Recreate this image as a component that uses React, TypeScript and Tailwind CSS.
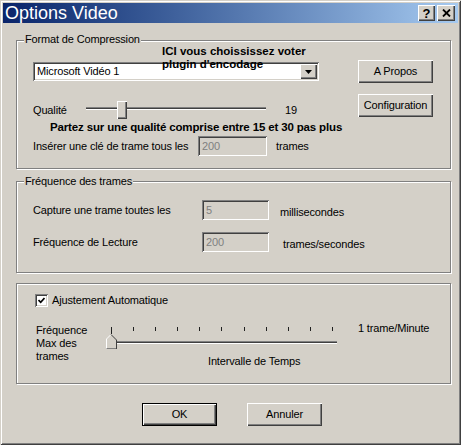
import React from 'react'

// Win2k 3D borders
const raised = 'shadow-[inset_1px_1px_0_#fff,inset_-1px_-1px_0_#404040,inset_-2px_-2px_0_#808080]'
const sunken =
  'shadow-[inset_1px_1px_0_#808080,inset_-1px_-1px_0_#fff,inset_2px_2px_0_#404040,inset_-2px_-2px_0_#d4d0c8]'
const etched = 'border border-[#808080] shadow-[inset_1px_1px_0_#fff,1px_1px_0_#fff]'

const Button: React.FC<{ label: string; isDefault?: boolean; className?: string }> = ({
  label,
  isDefault,
  className = '',
}) =>
  isDefault ? (
    <div className={`w-[75px] h-[23px] border border-black ${className}`}>
      <div className={`w-full h-full flex items-center justify-center ${raised}`}>{label}</div>
    </div>
  ) : (
    <div className={`w-[75px] h-[23px] flex items-center justify-center ${raised} ${className}`}>{label}</div>
  )

const DisabledInput: React.FC<{ value: string; width: string }> = ({ value, width }) => (
  <div className={`${width} h-[20px] flex items-center pl-[4px] text-[#808080] ${sunken}`}>{value}</div>
)

const Track: React.FC<{ className?: string }> = ({ className = '' }) => (
  <div className={`h-[3px] border-t border-t-[#808080] border-b border-b-white bg-[#404040] ${className}`} />
)

export default function App() {
  return (
    <div className="w-[461px] h-[445px] relative overflow-hidden bg-[#d4d0c8] p-[3px] shadow-[inset_1px_1px_0_#d4d0c8,inset_-1px_-1px_0_#404040,inset_2px_2px_0_#fff,inset_-2px_-2px_0_#808080] font-['Liberation_Sans',Arial,sans-serif] text-[11px] leading-[13px] tracking-[-0.15px] text-black">
      {/* barre de titre */}
      <div className="h-[20px] flex items-center pl-[2px] pr-[3px] bg-linear-to-r from-[#0a246a] to-[#a6caf0]">
        <span className="text-white text-[18px] leading-[20px] tracking-normal">Options Video</span>
        <div className="ml-auto flex gap-[2px]">
          <div className={`w-[17px] h-[16px] bg-[#d4d0c8] flex items-center justify-center font-bold text-[13px] ${raised}`}>
            ?
          </div>
          <div className={`w-[18px] h-[16px] bg-[#d4d0c8] flex items-center justify-center ${raised}`}>
            <svg width="9" height="8" viewBox="0 0 9 8">
              <path d="M1 0.5 L8 7.5 M8 0.5 L1 7.5" stroke="#000" strokeWidth="1.8" />
            </svg>
          </div>
        </div>
      </div>

      {/* Format de Compression */}
      <div className={`relative ml-[13px] mt-[17px] w-[435px] h-[129px] ${etched}`}>
        <span className="absolute left-[7px] -top-[8px] px-[1px] bg-[#d4d0c8]">Format de Compression</span>
        <div className="flex pl-[16px] pt-[19px]">
          <div className="w-[286px]">
            <div className={`mt-[2px] h-[19px] w-[286px] bg-white flex items-center pl-[4px] pr-[2px] ${sunken}`}>
              <span>Microsoft Vidéo 1</span>
              <div className={`ml-auto w-[17px] h-[15px] bg-[#d4d0c8] flex items-center justify-center ${raised}`}>
                <svg width="7" height="4" viewBox="0 0 7 4">
                  <polygon points="0,0 7,0 3.5,4" fill="#000" />
                </svg>
              </div>
            </div>

            <div className="mt-[20px] h-[18px] flex items-start">
              <span className="w-[53px] mt-[3px]">Qualité</span>
              <div className="relative mt-[6px]">
                <Track className="w-[180px]" />
                <div className={`absolute left-[31px] -top-[6px] w-[10px] h-[18px] bg-[#d4d0c8] ${raised}`} />
              </div>
              <span className="ml-[19px] mt-[3px]">19</span>
            </div>

            <div className="mt-[1px] pl-[17px] font-bold text-[11.5px] leading-[14px] tracking-[-0.15px] whitespace-nowrap">
              Partez sur une qualité comprise entre 15 et 30 pas plus
            </div>

            <div className="mt-[2px] h-[20px] flex items-center">
              <span className="w-[165px] whitespace-nowrap">Insérer une clé de trame tous les</span>
              <DisabledInput value="200" width="w-[69px]" />
              <span className="ml-[9px]">trames</span>
            </div>
          </div>

          <div className="ml-[39px] flex flex-col">
            <Button label="A Propos" />
            <Button label="Configuration" className="mt-[11px]" />
          </div>
        </div>
      </div>

      {/* Fréquence des trames */}
      <div className={`relative ml-[13px] mt-[12px] w-[435px] h-[92px] ${etched}`}>
        <span className="absolute left-[7px] -top-[7px] px-[1px] bg-[#d4d0c8]">Fréquence des trames</span>
        <div className="pl-[16px] pt-[18px]">
          <div className="h-[20px] flex items-center">
            <span className="w-[169px] whitespace-nowrap">Capture une trame toutes les</span>
            <DisabledInput value="5" width="w-[67px]" />
            <span className="ml-[11px] mt-[5px]">millisecondes</span>
          </div>
          <div className="mt-[12px] h-[20px] flex items-center">
            <span className="w-[169px] whitespace-nowrap">Fréquence de Lecture</span>
            <DisabledInput value="200" width="w-[67px]" />
            <span className="ml-[14px] mt-[5px]">trames/secondes</span>
          </div>
        </div>
      </div>

      {/* Ajustement Automatique */}
      <div className={`ml-[13px] mt-[10px] w-[435px] h-[101px] ${etched}`}>
        <div className="pl-[18px] pt-[10px]">
          <div className="h-[13px] flex items-center">
            <div className={`w-[13px] h-[13px] bg-white flex items-center justify-center ${sunken}`}>
              <svg width="7" height="7" viewBox="0 0 7 7">
                <polyline points="0.5,3 2.7,5.3 6.5,1" fill="none" stroke="#000" strokeWidth="1.7" />
              </svg>
            </div>
            <span className="ml-[4px]">Ajustement Automatique</span>
          </div>

          <div className="mt-[17px] flex items-start">
            <div className="ml-[1px] w-[69px]">
              Fréquence
              <br />
              Max des
              <br />
              trames
            </div>
            <div className="relative w-[233px]">
              <div className="ml-[6px] mt-[3px] w-[222px] h-[4px] flex justify-between items-start">
                {Array.from({ length: 11 }).map((_, i) => (
                  <div key={i} className={`w-[1px] bg-[#202020] ${i === 0 ? 'h-[7px]' : 'h-[4px]'}`} />
                ))}
              </div>
              <Track className="ml-[1px] mt-[10px] w-[231px]" />
              <svg className="absolute left-0 top-[9px]" width="13" height="17" viewBox="0 0 13 17">
                <polygon points="1,6 6,1 11.5,6.5 11.5,16 1,16" fill="#d4d0c8" />
                <polyline points="1.5,16 1.5,6 6,1.5" fill="none" stroke="#fff" strokeWidth="1" />
                <polyline points="6,1.5 11.5,7 11.5,16" fill="none" stroke="#404040" strokeWidth="1" />
                <line x1="1.5" y1="15.5" x2="11" y2="15.5" stroke="#808080" strokeWidth="1" />
              </svg>
              <div className="ml-[103px] mt-[11px] whitespace-nowrap">Intervalle de Temps</div>
            </div>
            <div className="ml-[20px] -mt-[2px] whitespace-nowrap">1 trame/Minute</div>
          </div>
        </div>
      </div>

      {/* OK / Annuler */}
      <div className="mt-[19px] ml-[139px] flex">
        <Button label="OK" isDefault />
        <Button label="Annuler" className="ml-[30px]" />
      </div>

      {/* annotation ajoutée sur la capture */}
      <div className="absolute left-[162px] top-[45px] font-bold text-[11.5px] leading-[13px] tracking-normal whitespace-nowrap">
        ICI vous choississez voter
        <br />
        plugin d'encodage
      </div>
    </div>
  )
}
